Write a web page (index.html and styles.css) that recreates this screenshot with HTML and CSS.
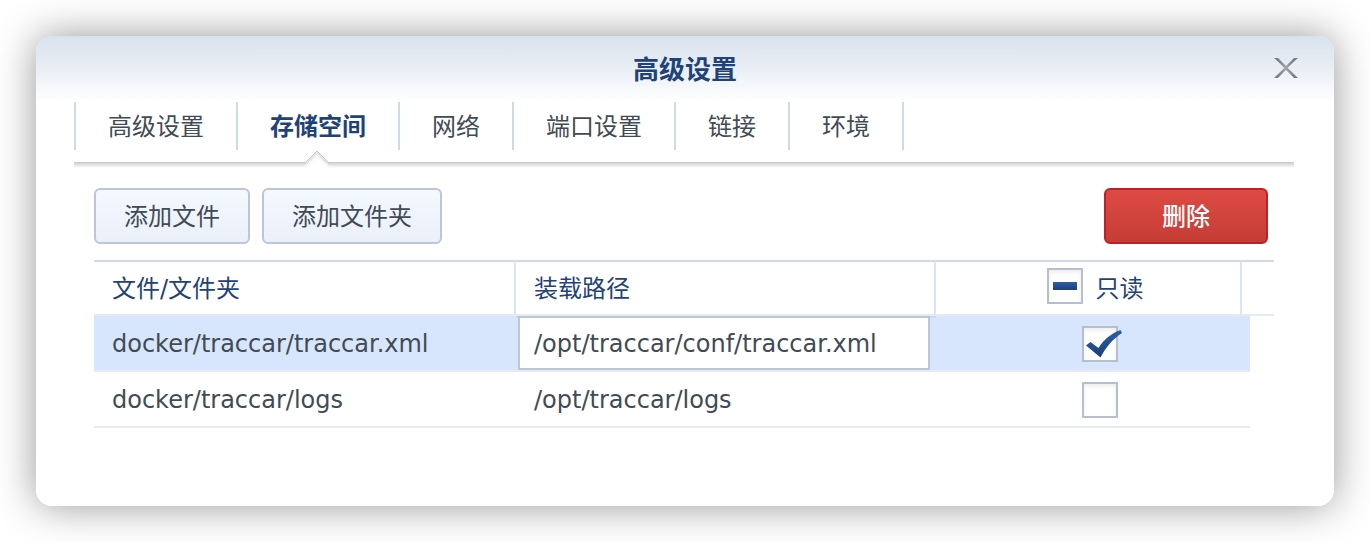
FILE: index.html
```html
<!DOCTYPE html>
<html lang="zh-CN">
<head>
<meta charset="utf-8">
<meta name="viewport" content="width=device-width, initial-scale=1">
<title>高级设置</title>
<link rel="stylesheet" href="styles.css">
</head>
<body>
<section class="dialog" role="dialog" aria-labelledby="dialog-title">
  <header class="dialog-header">
    <h1 class="dialog-title" id="dialog-title">高级设置</h1>
    <button class="close" type="button" aria-label="关闭">
      <svg width="26" height="24" viewBox="0 0 26 24" aria-hidden="true">
        <defs>
          <linearGradient id="close-fill" x1="0" y1="0" x2="0" y2="1">
            <stop offset="0" stop-color="#74787e"/>
            <stop offset=".5" stop-color="#a0a6ad"/>
            <stop offset="1" stop-color="#74787e"/>
          </linearGradient>
        </defs>
        <path d="M1 2h4l8 8 8-8h4L14.800 12 25 22h-4l-8-8-8 8H1l10.200-10z" fill="#fff"/>
        <path d="M1 1h4l8 8 8-8h4L14.800 11 25 21h-4l-8-8-8 8H1l10.200-10z" fill="url(#close-fill)"/>
      </svg>
    </button>
  </header>

  <nav class="tabs">
    <a class="tab" href="#advanced">高级设置</a>
    <a class="tab tab-active" href="#storage" aria-current="page">存储空间
      <svg class="tab-arrow" width="26" height="20" viewBox="0 0 26 20" aria-hidden="true">
        <path d="M1 12v8h24v-8L13 0z" fill="#fff"/>
        <g fill="none">
          <path d="M0 18.500h2L13 7.500l11 11h2" stroke="#fdfdfd"/>
          <path d="M0 17.500h2L13 6.500l11 11h2" stroke="#fafafa"/>
          <path d="M0 16.500h2L13 5.500l11 11h2" stroke="#f5f5f5"/>
          <path d="M0 15.500h2L13 4.500l11 11h2" stroke="#eeeeee"/>
          <path d="M0 14.500h2L13 3.500l11 11h2" stroke="#e2e2e2"/>
          <path d="M0 13.500h2L13 2.500l11 11h2" stroke="#d2d2d2"/>
          <path d="M0 12.500h1.500L13 1l11.500 11.500H26" stroke="#c6c6c6"/>
        </g>
      </svg>
    </a>
    <a class="tab" href="#network">网络</a>
    <a class="tab" href="#ports">端口设置</a>
    <a class="tab" href="#links">链接</a>
    <a class="tab" href="#env">环境</a>
  </nav>

  <main class="panel" id="storage">
    <div class="toolbar">
      <button class="btn" type="button">添加文件</button>
      <button class="btn" type="button">添加文件夹</button>
      <button class="btn btn-danger" type="button">删除</button>
    </div>

    <table class="volumes">
      <colgroup>
        <col class="col-file"><col class="col-mount"><col class="col-readonly"><col class="col-edge"><col class="col-scroll">
      </colgroup>
      <thead>
        <tr>
          <th scope="col">文件/文件夹</th>
          <th scope="col">装载路径</th>
          <th scope="col" class="readonly">
            <label class="check-label">
              <span class="check">
                <input type="checkbox" aria-checked="mixed">
                <svg class="mark" width="42" height="36" viewBox="0 0 42 36" aria-hidden="true">
                  <defs>
                    <linearGradient id="mark-fill" x1="0" y1="0" x2="0" y2="1">
                      <stop offset="0" stop-color="#2c60a8"/>
                      <stop offset="1" stop-color="#1d3f74"/>
                    </linearGradient>
                  </defs>
                  <path d="M6 14h24v8H6z" fill="url(#mark-fill)"/>
                </svg>
              </span>
              <span class="check-text">只读</span>
            </label>
          </th>
          <th colspan="2" class="filler"></th>
        </tr>
      </thead>
      <tbody>
        <tr class="selected">
          <td>docker/traccar/traccar.xml</td>
          <td class="editing"><input class="path" type="text" value="/opt/traccar/conf/traccar.xml" aria-label="装载路径"></td>
          <td class="readonly" colspan="2">
            <span class="check">
              <input type="checkbox" checked aria-label="只读 traccar.xml">
              <svg class="mark" width="42" height="36" viewBox="0 0 42 36" aria-hidden="true">
                <path d="M4 19.500 8.500 16l8 6C22 13 30 7 38.500 4L40 7C31 13 24 21 18.500 31.500z" fill="url(#mark-fill)"/>
              </svg>
            </span>
          </td>
        </tr>
        <tr>
          <td>docker/traccar/logs</td>
          <td>/opt/traccar/logs</td>
          <td class="readonly" colspan="2">
            <span class="check"><input type="checkbox" aria-label="只读 logs"></span>
          </td>
        </tr>
      </tbody>
    </table>
  </main>
</section>
</body>
</html>
```

FILE: styles.css
```css
* {
  box-sizing: border-box;
}

body {
  margin: 0;
  min-height: 100vh;
  padding: 36px;
  display: flex;
  background: #fff;
  color: #414b55;
  font: 24px/32px "DejaVu Sans", "Noto Sans CJK SC", sans-serif;
}

button,
input {
  font: inherit;
  color: inherit;
}

.dialog {
  flex: 1;
  min-width: 0;
  padding-bottom: 76px;
  border-radius: 16px;
  background: linear-gradient(#d8e2ed, #e7ecf4 28px, #fff 66px);
  box-shadow: 0 0 40px rgba(0, 0, 0, 0.41);
}

.dialog-header {
  display: grid;
  grid-template-columns: 1fr auto 1fr;
  align-items: center;
  height: 66px;
  padding: 0 35px;
}

.dialog-title {
  grid-column: 2;
  margin: 0;
  padding-top: 2px;
  color: #1f4379;
  font-size: 26px;
  line-height: 32px;
  font-weight: bold;
}

.close {
  justify-self: end;
  display: flex;
  padding: 0;
  border: 0;
  background: none;
}

.tabs {
  display: flex;
  height: 66px;
  margin: 0 40px 0 38px;
  padding-bottom: 18px;
  background: linear-gradient(#c6c6c6, #d2d2d2 1px, #fff) bottom / 100% 6px no-repeat;
}

.tab {
  position: relative;
  padding: 0 32px;
  border-left: 2px solid #cfdae7;
  color: #414b55;
  line-height: 50px;
  text-decoration: none;
  white-space: nowrap;
}

.tab:last-child {
  border-right: 2px solid #cfdae7;
}

.tab-active {
  color: #1f4379;
  font-weight: bold;
}

.tab-arrow {
  position: absolute;
  top: 48px;
  left: 50%;
  margin-left: -14px;
}

.panel {
  padding: 20px 60px 0 58px;
}

.toolbar {
  display: flex;
  gap: 12px;
  padding: 0 6px 16px 0;
}

.btn {
  height: 56px;
  padding: 2px 28px 0;
  border: 2px solid #bcc6d5;
  border-radius: 6px;
  background: linear-gradient(#f4f8ff, #ebf0f9);
  white-space: nowrap;
}

.btn-danger {
  margin-left: auto;
  padding: 2px 56px 0;
  border-color: #be2127;
  background: linear-gradient(#dd4b43, #c53d36);
  color: #fff;
  font-weight: 500;
}

.volumes {
  width: 100%;
  table-layout: fixed;
  border-collapse: separate;
  border-spacing: 0;
}

.col-mount {
  width: 420px;
}

.col-readonly {
  width: 306px;
}

.col-edge {
  width: 8px;
}

.col-scroll {
  width: 24px;
}

.volumes th {
  height: 56px;
  padding: 2px 18px 0;
  border-top: 2px solid #cfdae7;
  border-right: 2px solid #dbe5f1;
  border-bottom: 2px solid #e6ebf1;
  color: #1f4379;
  font-weight: normal;
  text-align: left;
}

.volumes .filler {
  padding: 0;
  border-right: 0;
}

.volumes td {
  height: 56px;
  padding: 2px 18px 0;
  border-bottom: 2px solid #e6ebf1;
}

.volumes th.readonly {
  padding: 0 0 3px 14px;
}

.volumes td.readonly {
  padding: 2px 0 0 14px;
  text-align: center;
}

.selected td {
  background: #d7e6fc;
  background-clip: padding-box;
}

.volumes .editing {
  padding: 0 6px 0 2px;
  box-shadow: inset 0 2px #c9daee;
}

.path {
  display: block;
  width: 100%;
  height: 54px;
  padding: 2px 14px 0;
  border: 2px solid #bcc6d5;
  border-radius: 0;
  background: #fff;
  outline: 0;
}

.check-label {
  display: flex;
  justify-content: center;
  gap: 13px;
}

.check-text {
  margin-top: 5px;
}

.check {
  position: relative;
  display: inline-block;
  width: 36px;
  height: 36px;
  vertical-align: middle;
}

.check input {
  appearance: none;
  display: block;
  width: 36px;
  height: 36px;
  margin: 0;
  border: 2px solid #b5bfce;
  background: #fff;
  box-shadow: inset 0 2px 4px rgba(0, 0, 0, 0.08);
}

.mark {
  position: absolute;
  top: 0;
  left: 0;
  pointer-events: none;
}
```
